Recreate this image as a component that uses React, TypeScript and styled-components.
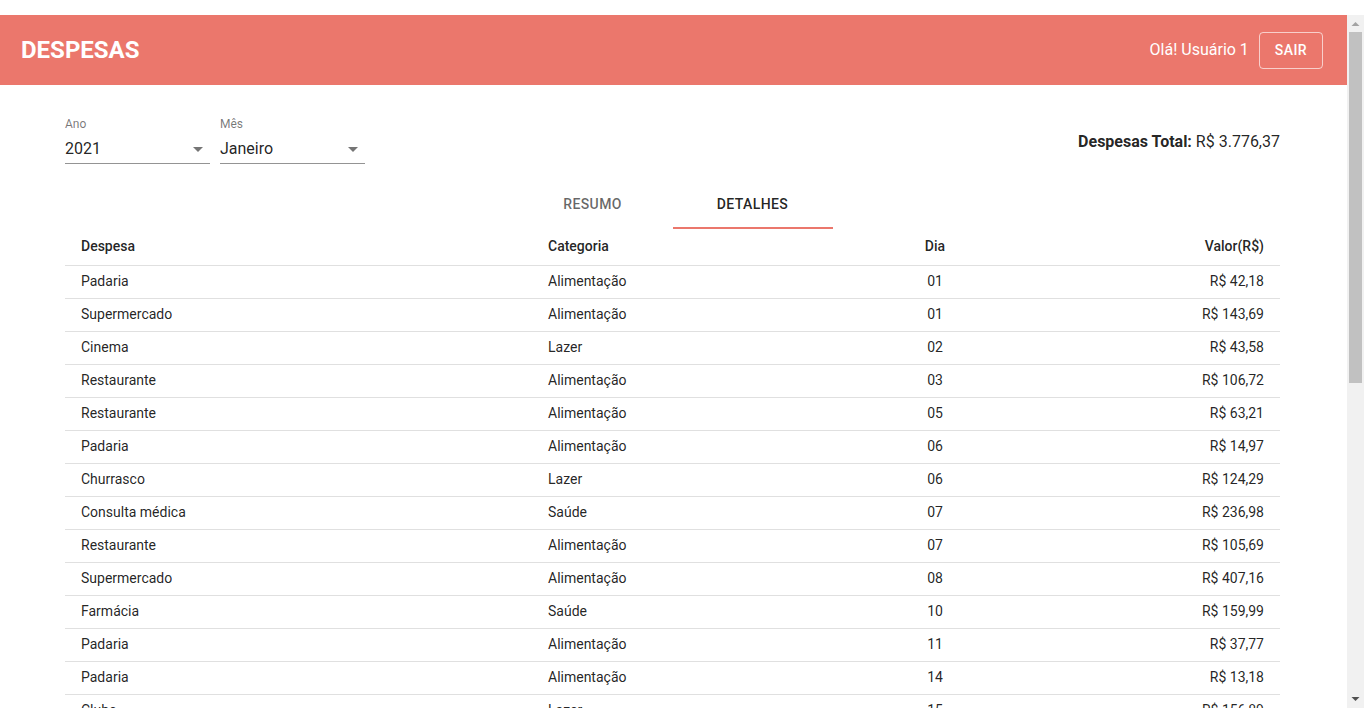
import React from 'react';
import styled, { createGlobalStyle } from 'styled-components';

const GlobalStyle = createGlobalStyle`
  html, body { margin: 0; padding: 0; background: #fff; overflow: hidden; }
  body {
    font-family: Roboto, "Helvetica Neue", Arial, sans-serif;
    -webkit-font-smoothing: antialiased;
  }
  * { box-sizing: border-box; }
`;

const Frame = styled.div`
  display: flex;
  flex-direction: column;
  height: 708px;
  background: #fff;
`;

const TopStrip = styled.div`
  height: 15px;
  flex: none;
`;

const Viewport = styled.div`
  flex: 1;
  min-height: 0;
  display: flex;
`;

const Page = styled.div`
  flex: 1;
  min-width: 0;
  overflow: hidden;
`;

const ScrollBar = styled.div`
  width: 17px;
  flex: none;
  display: flex;
  flex-direction: column;
  background: #f1f1f1;
`;

const ScrollButton = styled.div`
  height: 17px;
  flex: none;
  display: flex;
`;

const ScrollTrack = styled.div`
  flex: 1;
  padding: 0 2px;
`;

const ScrollThumb = styled.div`
  height: 351px;
  background: #c1c1c1;
`;

const AppBar = styled.header`
  height: 70px;
  background: #eb776c;
  color: #fff;
  display: flex;
  align-items: center;
  padding: 0 24px 0 21px;
`;

const Title = styled.h1`
  margin: 0;
  flex: 1;
  font-size: 24px;
  font-weight: 700;
  line-height: 1;
`;

const Greeting = styled.span`
  font-size: 16px;
  font-weight: 400;
  margin-right: 10px;
  margin-bottom: 2px;
`;

const LogoutButton = styled.button`
  height: 37px;
  padding: 0 15px;
  border: 1px solid rgba(255, 255, 255, 0.65);
  border-radius: 4px;
  background: transparent;
  color: #fff;
  font-family: Roboto, sans-serif;
  font-size: 14px;
  font-weight: 500;
  letter-spacing: 0.02857em;
  text-transform: uppercase;
  cursor: pointer;
`;

const Main = styled.main`
  margin: 0 67px 0 65px;
  padding-top: 32px;
`;

const TopRow = styled.div`
  display: flex;
  justify-content: space-between;
  align-items: center;
`;

const Filters = styled.div`
  display: flex;
  gap: 10px;
`;

const Field = styled.div`
  width: 145px;
`;

const FieldLabel = styled.div`
  font-size: 12px;
  line-height: 14px;
  margin-bottom: 1px;
  color: rgba(0, 0, 0, 0.54);
`;

const FieldInput = styled.div`
  position: relative;
  padding: 7px 24px 5px 0;
  font-size: 16px;
  line-height: 19px;
  color: rgba(0, 0, 0, 0.87);
  border-bottom: 1px solid rgba(0, 0, 0, 0.42);
`;

const ArrowIcon = styled.svg`
  position: absolute;
  right: 0;
  top: 5px;
  width: 24px;
  height: 24px;
  fill: rgba(0, 0, 0, 0.54);
`;

const Total = styled.div`
  font-size: 16px;
  line-height: 19px;
  padding-top: 1px;
  color: rgba(0, 0, 0, 0.87);
`;

const TotalLabel = styled.strong`
  font-weight: 700;
`;

const TabBar = styled.nav`
  display: flex;
  justify-content: center;
  margin-top: 17px;
`;

const Tab = styled.button<{ $active?: boolean }>`
  width: 160px;
  height: 48px;
  border: 0;
  border-bottom: 2px solid ${(p) => (p.$active ? '#eb776c' : 'transparent')};
  padding: 0 12px;
  background: transparent;
  font-family: Roboto, sans-serif;
  font-size: 14px;
  font-weight: 500;
  letter-spacing: 0.02857em;
  text-transform: uppercase;
  color: ${(p) => (p.$active ? 'rgba(0,0,0,0.87)' : 'rgba(0,0,0,0.6)')};
  cursor: pointer;
`;

const Table = styled.table`
  width: 100%;
  border-collapse: collapse;
  table-layout: fixed;
`;

const HeadCell = styled.th<{ $align?: string }>`
  padding: 5px 16px 7px;
  font-size: 14px;
  font-weight: 500;
  line-height: 24px;
  color: rgba(0, 0, 0, 0.87);
  text-align: ${(p) => p.$align || 'left'};
  border-bottom: 1px solid rgb(224, 224, 224);
`;

const Cell = styled.td<{ $align?: string }>`
  padding: 5px 16px 7px;
  font-size: 14px;
  font-weight: 400;
  line-height: 20px;
  color: rgba(0, 0, 0, 0.87);
  text-align: ${(p) => p.$align || 'left'};
  border-bottom: 1px solid rgb(224, 224, 224);
  white-space: nowrap;
`;

type Expense = [string, string, string, string];

const rows: Expense[] = [
  ['Padaria', 'Alimentação', '01', 'R$ 42,18'],
  ['Supermercado', 'Alimentação', '01', 'R$ 143,69'],
  ['Cinema', 'Lazer', '02', 'R$ 43,58'],
  ['Restaurante', 'Alimentação', '03', 'R$ 106,72'],
  ['Restaurante', 'Alimentação', '05', 'R$ 63,21'],
  ['Padaria', 'Alimentação', '06', 'R$ 14,97'],
  ['Churrasco', 'Lazer', '06', 'R$ 124,29'],
  ['Consulta médica', 'Saúde', '07', 'R$ 236,98'],
  ['Restaurante', 'Alimentação', '07', 'R$ 105,69'],
  ['Supermercado', 'Alimentação', '08', 'R$ 407,16'],
  ['Farmácia', 'Saúde', '10', 'R$ 159,99'],
  ['Padaria', 'Alimentação', '11', 'R$ 37,77'],
  ['Padaria', 'Alimentação', '14', 'R$ 13,18'],
  ['Clube', 'Lazer', '15', 'R$ 156,89'],
];

const DropArrow = () => (
  <ArrowIcon viewBox="0 0 24 24" aria-hidden="true">
    <path d="M7 10l5 5 5-5z" />
  </ArrowIcon>
);

const UpArrow = () => (
  <svg width="17" height="17" viewBox="0 0 17 17" aria-hidden="true">
    <polygon points="4.5,11 8.5,7 12.5,11" fill="#a3a3a3" />
  </svg>
);

const DownArrow = () => (
  <svg width="17" height="17" viewBox="0 0 17 17" aria-hidden="true">
    <polygon points="4.5,6 12.5,6 8.5,10" fill="#505050" />
  </svg>
);

export default function App() {
  return (
    <>
      <GlobalStyle />
      <Frame>
        <TopStrip />
        <Viewport>
          <Page>
            <AppBar>
              <Title>DESPESAS</Title>
              <Greeting>Olá! Usuário 1</Greeting>
              <LogoutButton>Sair</LogoutButton>
            </AppBar>
            <Main>
              <TopRow>
                <Filters>
                  <Field>
                    <FieldLabel>Ano</FieldLabel>
                    <FieldInput>
                      2021
                      <DropArrow />
                    </FieldInput>
                  </Field>
                  <Field>
                    <FieldLabel>Mês</FieldLabel>
                    <FieldInput>
                      Janeiro
                      <DropArrow />
                    </FieldInput>
                  </Field>
                </Filters>
                <Total>
                  <TotalLabel>Despesas Total:</TotalLabel> R$ 3.776,37
                </Total>
              </TopRow>
              <TabBar>
                <Tab>Resumo</Tab>
                <Tab $active>Detalhes</Tab>
              </TabBar>
              <Table>
                <colgroup>
                  <col style={{ width: 467 }} />
                  <col style={{ width: 339 }} />
                  <col style={{ width: 128 }} />
                  <col />
                </colgroup>
                <thead>
                  <tr>
                    <HeadCell>Despesa</HeadCell>
                    <HeadCell>Categoria</HeadCell>
                    <HeadCell $align="center">Dia</HeadCell>
                    <HeadCell $align="right">Valor(R$)</HeadCell>
                  </tr>
                </thead>
                <tbody>
                  {rows.map((r, i) => (
                    <tr key={i}>
                      <Cell>{r[0]}</Cell>
                      <Cell>{r[1]}</Cell>
                      <Cell $align="center">{r[2]}</Cell>
                      <Cell $align="right">{r[3]}</Cell>
                    </tr>
                  ))}
                </tbody>
              </Table>
            </Main>
          </Page>
          <ScrollBar>
            <ScrollButton>
              <UpArrow />
            </ScrollButton>
            <ScrollTrack>
              <ScrollThumb />
            </ScrollTrack>
            <ScrollButton>
              <DownArrow />
            </ScrollButton>
          </ScrollBar>
        </Viewport>
      </Frame>
    </>
  );
}
